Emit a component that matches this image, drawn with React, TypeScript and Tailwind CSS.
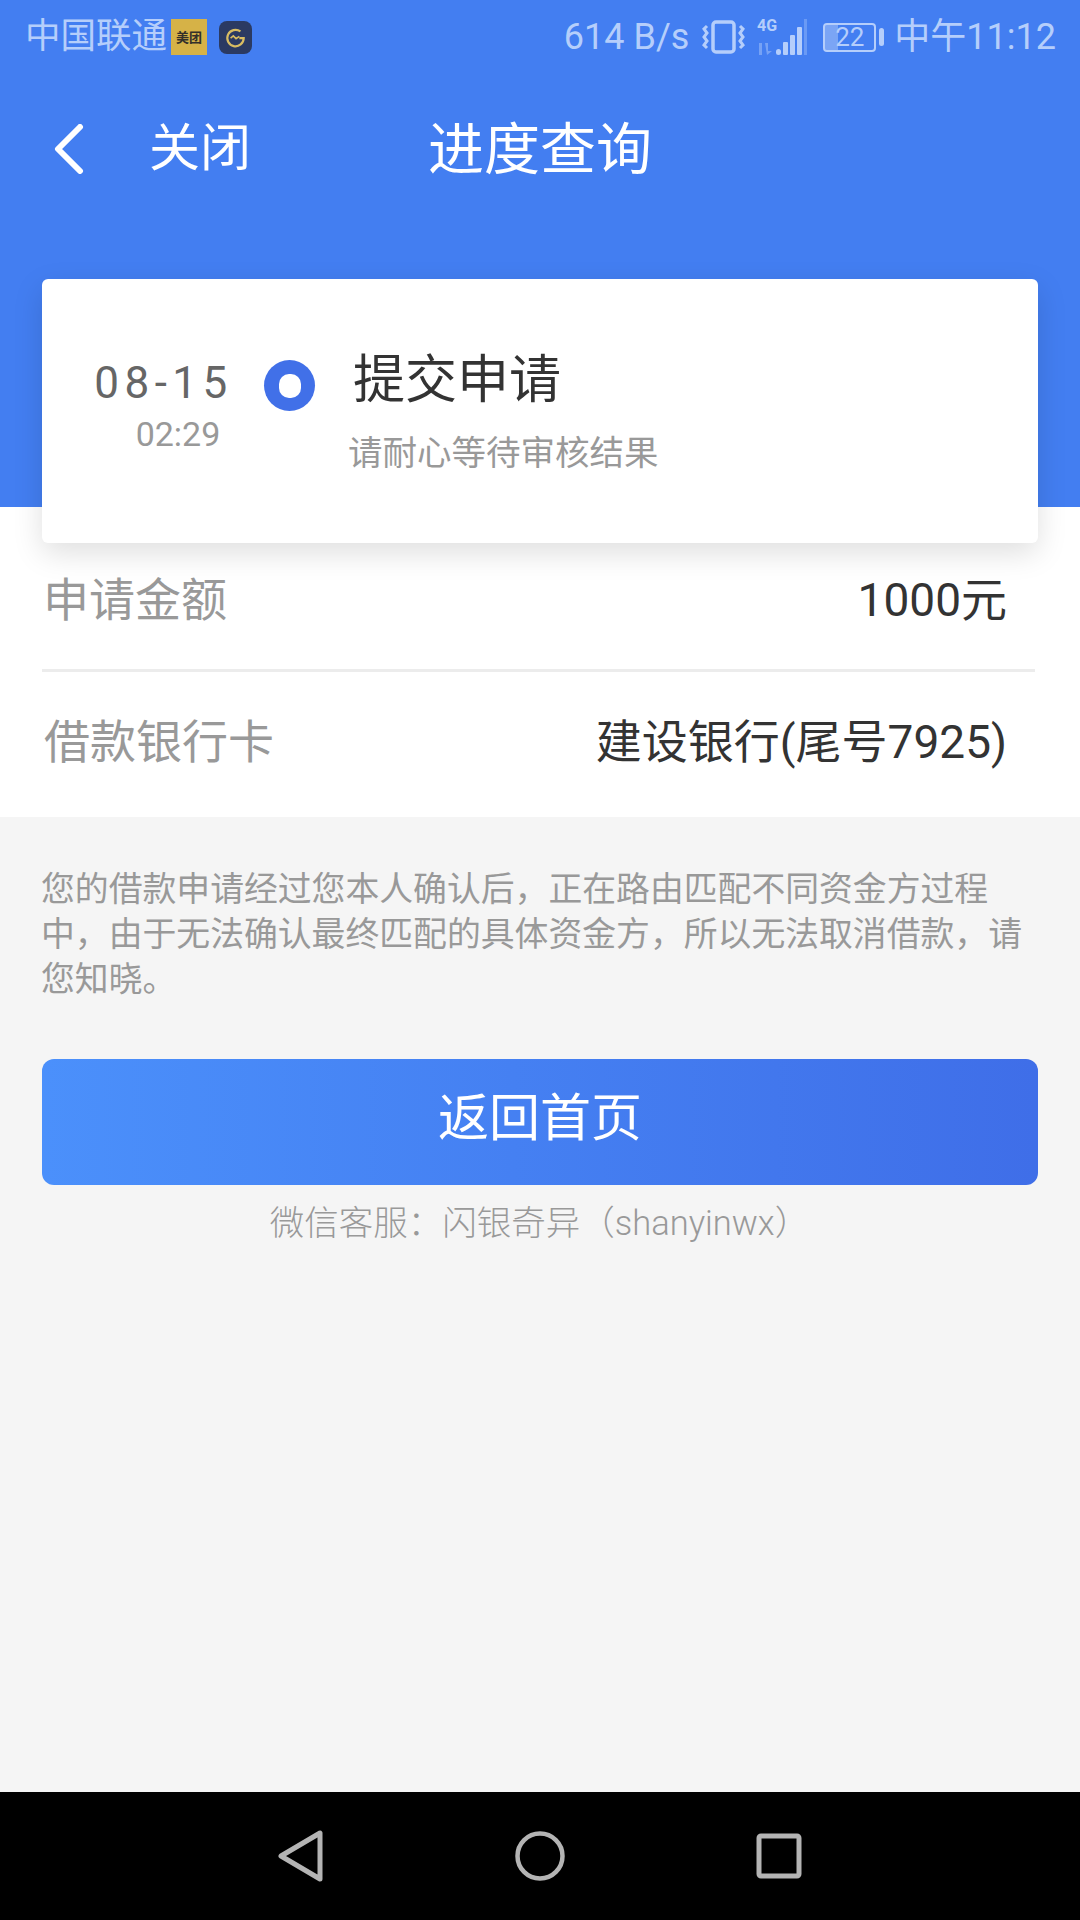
import React from 'react';

const font = { fontFamily: 'Roboto, "Noto Sans CJK SC", sans-serif' };

// full-width punctuation, kept as escapes so it survives editors
const notice = '您的借款申请经过您本人确认后\uFF0C正在路由匹配不同资金方过程中\uFF0C由于无法确认最终匹配的具体资金方\uFF0C所以无法取消借款\uFF0C请您知晓\u3002';
const contact = '微信客服\uFF1A闪银奇异\uFF08shanyinwx\uFF09';

const VibrateIcon = () => (
  <svg width="45" height="36" viewBox="0 0 45 36" fill="none" stroke="currentColor">
    <rect x="12" y="3" width="21" height="30" rx="3" strokeWidth="3.5" />
    <path d="M6 7l-3 3 3 4-3 4 3 4-3 4 3 3M39 7l3 3-3 4 3 4-3 4 3 4-3 3" strokeWidth="3" />
  </svg>
);

const SignalIcon = () => (
  <svg width="56" height="40" viewBox="0 0 56 40" fill="currentColor">
    <text x="1" y="14" fontSize="16" fontWeight="700" style={font}>4G</text>
    <g opacity="0.45">
      <path d="M3 26h3v12H3zM9 26h3v8h4l-5 4z" />
    </g>
    <rect x="20" y="32" width="5" height="6" rx="2.5" />
    <rect x="27" y="25" width="5" height="13" rx="1" />
    <rect x="34" y="18" width="5" height="20" rx="1" />
    <rect x="41" y="10" width="5" height="28" rx="1" />
    <rect x="48" y="2" width="3" height="36" opacity="0.35" />
  </svg>
);

const Battery = () => (
  <div className="flex items-center gap-[3px]">
    <div className="relative h-[29px] w-[53px] overflow-hidden rounded-[4px] border-2 border-current">
      <div className="h-full w-[13px] bg-white/30" />
      <span className="absolute inset-0 flex items-center justify-center text-[26px] leading-none">22</span>
    </div>
    <div className="h-[18px] w-[5px] rounded-sm bg-current" />
  </div>
);

const StatusBar = () => (
  <div className="flex h-[74px] items-center justify-between pl-[25px] pr-[24px] text-[#b5cefb]">
    <div className="flex items-center">
      <span className="text-[35.5px] leading-none">中国联通</span>
      <div className="ml-[4px] flex h-[36px] w-[36px] items-center justify-center bg-[#d6b247] text-[13px] font-bold leading-none text-[#33302a]">美团</div>
      <div className="ml-[12px] flex h-[33px] w-[33px] items-center justify-center rounded-[8px] bg-[#2b3a62]">
        <svg width="23" height="23" viewBox="0 0 21 21" fill="none" stroke="#d9bd62" strokeWidth="2">
          <path d="M15 5a7.5 7.5 0 1 0 3 6h-4" />
          <path d="M6 11l2.5-2 2.5 2.5 3-2" strokeWidth="1.5" />
        </svg>
      </div>
    </div>
    <div className="flex items-center">
      <span className="text-[36px] leading-none">614 B/s</span>
      <div className="ml-[12px]"><VibrateIcon /></div>
      <div className="ml-[10px]"><SignalIcon /></div>
      <div className="ml-[11px]"><Battery /></div>
      <span className="ml-[10px] text-[36px] leading-none">中午11:12</span>
    </div>
  </div>
);

const NavBar = () => (
  <div className="flex h-[128px] items-center justify-center bg-black">
    <div className="flex w-[524px] items-center justify-between">
      <svg width="46" height="52" viewBox="0 0 46 52" fill="none" stroke="#b4b4b4" strokeWidth="5" strokeLinejoin="round">
        <path d="M3 26L42 3v46z" />
      </svg>
      <svg width="50" height="50" viewBox="0 0 50 50" fill="none" stroke="#b4b4b4" strokeWidth="4.5">
        <circle cx="25" cy="25" r="22.5" />
      </svg>
      <svg width="46" height="46" viewBox="0 0 46 46" fill="none" stroke="#b4b4b4" strokeWidth="5" strokeLinejoin="round">
        <rect x="3" y="3" width="40" height="40" rx="2" />
      </svg>
    </div>
  </div>
);

export default function App() {
  return (
    <div className="flex h-[1920px] w-[1080px] flex-col overflow-hidden bg-[#f5f5f5]" style={font}>
      {/* Blue header */}
      <div className="h-[507px] shrink-0 bg-[#437ef1]">
        <StatusBar />
        <div className="relative mt-[18px] flex h-[116px] items-center justify-center text-white">
          <div className="absolute left-[54px] top-[31px] flex items-center">
            <svg width="30" height="50" viewBox="0 0 30 50" fill="none" stroke="white" strokeWidth="6" strokeLinecap="round" strokeLinejoin="round">
              <path d="M26 3L4 25l22 22" />
            </svg>
            <span className="ml-[65px] text-[51px] leading-none">关闭</span>
          </div>
          <span className="text-[56px] leading-none">进度查询</span>
        </div>
      </div>

      {/* Info rows */}
      <div className="relative h-[310px] shrink-0 bg-white">
        <div className="absolute left-[42px] top-[-228px] flex h-[264px] w-[996px] rounded-[6px] bg-white pl-[53px] shadow-[0_10px_30px_rgba(0,0,0,0.13)]">
          <div className="flex w-[134px] flex-col items-center pt-[80px]">
            <span className="whitespace-nowrap pl-[3px] text-[44px] leading-[48px] tracking-[5.5px] text-[#666]">08-15</span>
            <span className="mt-[7px] whitespace-nowrap pl-[32px] text-[34px] leading-[40px] text-[#999]">02:29</span>
          </div>
          <div className="ml-[35px] mt-[81px] flex h-[51px] w-[51px] items-center justify-center rounded-full bg-[#4170e8]">
            <div className="h-[24px] w-[22px] rounded-[10px] bg-white" />
          </div>
          <div className="ml-[33px] pt-[72px]">
            <div className="pl-[5px] text-[52px] leading-[60px] text-[#333]">提交申请</div>
            <div className="mt-[22px] text-[34.5px] leading-[40px] text-[#999]">请耐心等待审核结果</div>
          </div>
        </div>
        <div className="flex h-[162px] items-end justify-between pb-[39px] pl-[43px] pr-[73px] pt-[53px]">
          <span className="text-[46px] leading-[60px] text-[#999]">申请金额</span>
          <span className="text-[46px] leading-[60px] text-[#333]">1000元</span>
        </div>
        <div className="ml-[42px] mr-[45px] h-[3px] bg-[#ececec]" />
        <div className="flex h-[143px] items-center justify-between pb-[3px] pl-[44px] pr-[73px]">
          <span className="text-[46px] leading-[60px] text-[#999]">借款银行卡</span>
          <span className="text-[46px] leading-[60px] text-[#333]">建设银行(尾号7925)</span>
        </div>
      </div>

      {/* Notice and action */}
      <div className="flex flex-1 flex-col pl-[41px] pr-[42px] pt-[50px]">
        <p className="text-[33.85px] leading-[45px] text-[#999]">{notice}</p>
        <button className="ml-[1px] mt-[57px] flex h-[126px] w-[996px] shrink-0 items-center justify-center rounded-[12px] bg-gradient-to-r from-[#4b90fb] to-[#3f6ee8] pb-[6px] text-[51px] text-white">
          返回首页
        </button>
        <div className="mt-[16px] text-center text-[34.5px] font-light leading-[44px] text-[#999]">{contact}</div>
      </div>

      <NavBar />
    </div>
  );
}
